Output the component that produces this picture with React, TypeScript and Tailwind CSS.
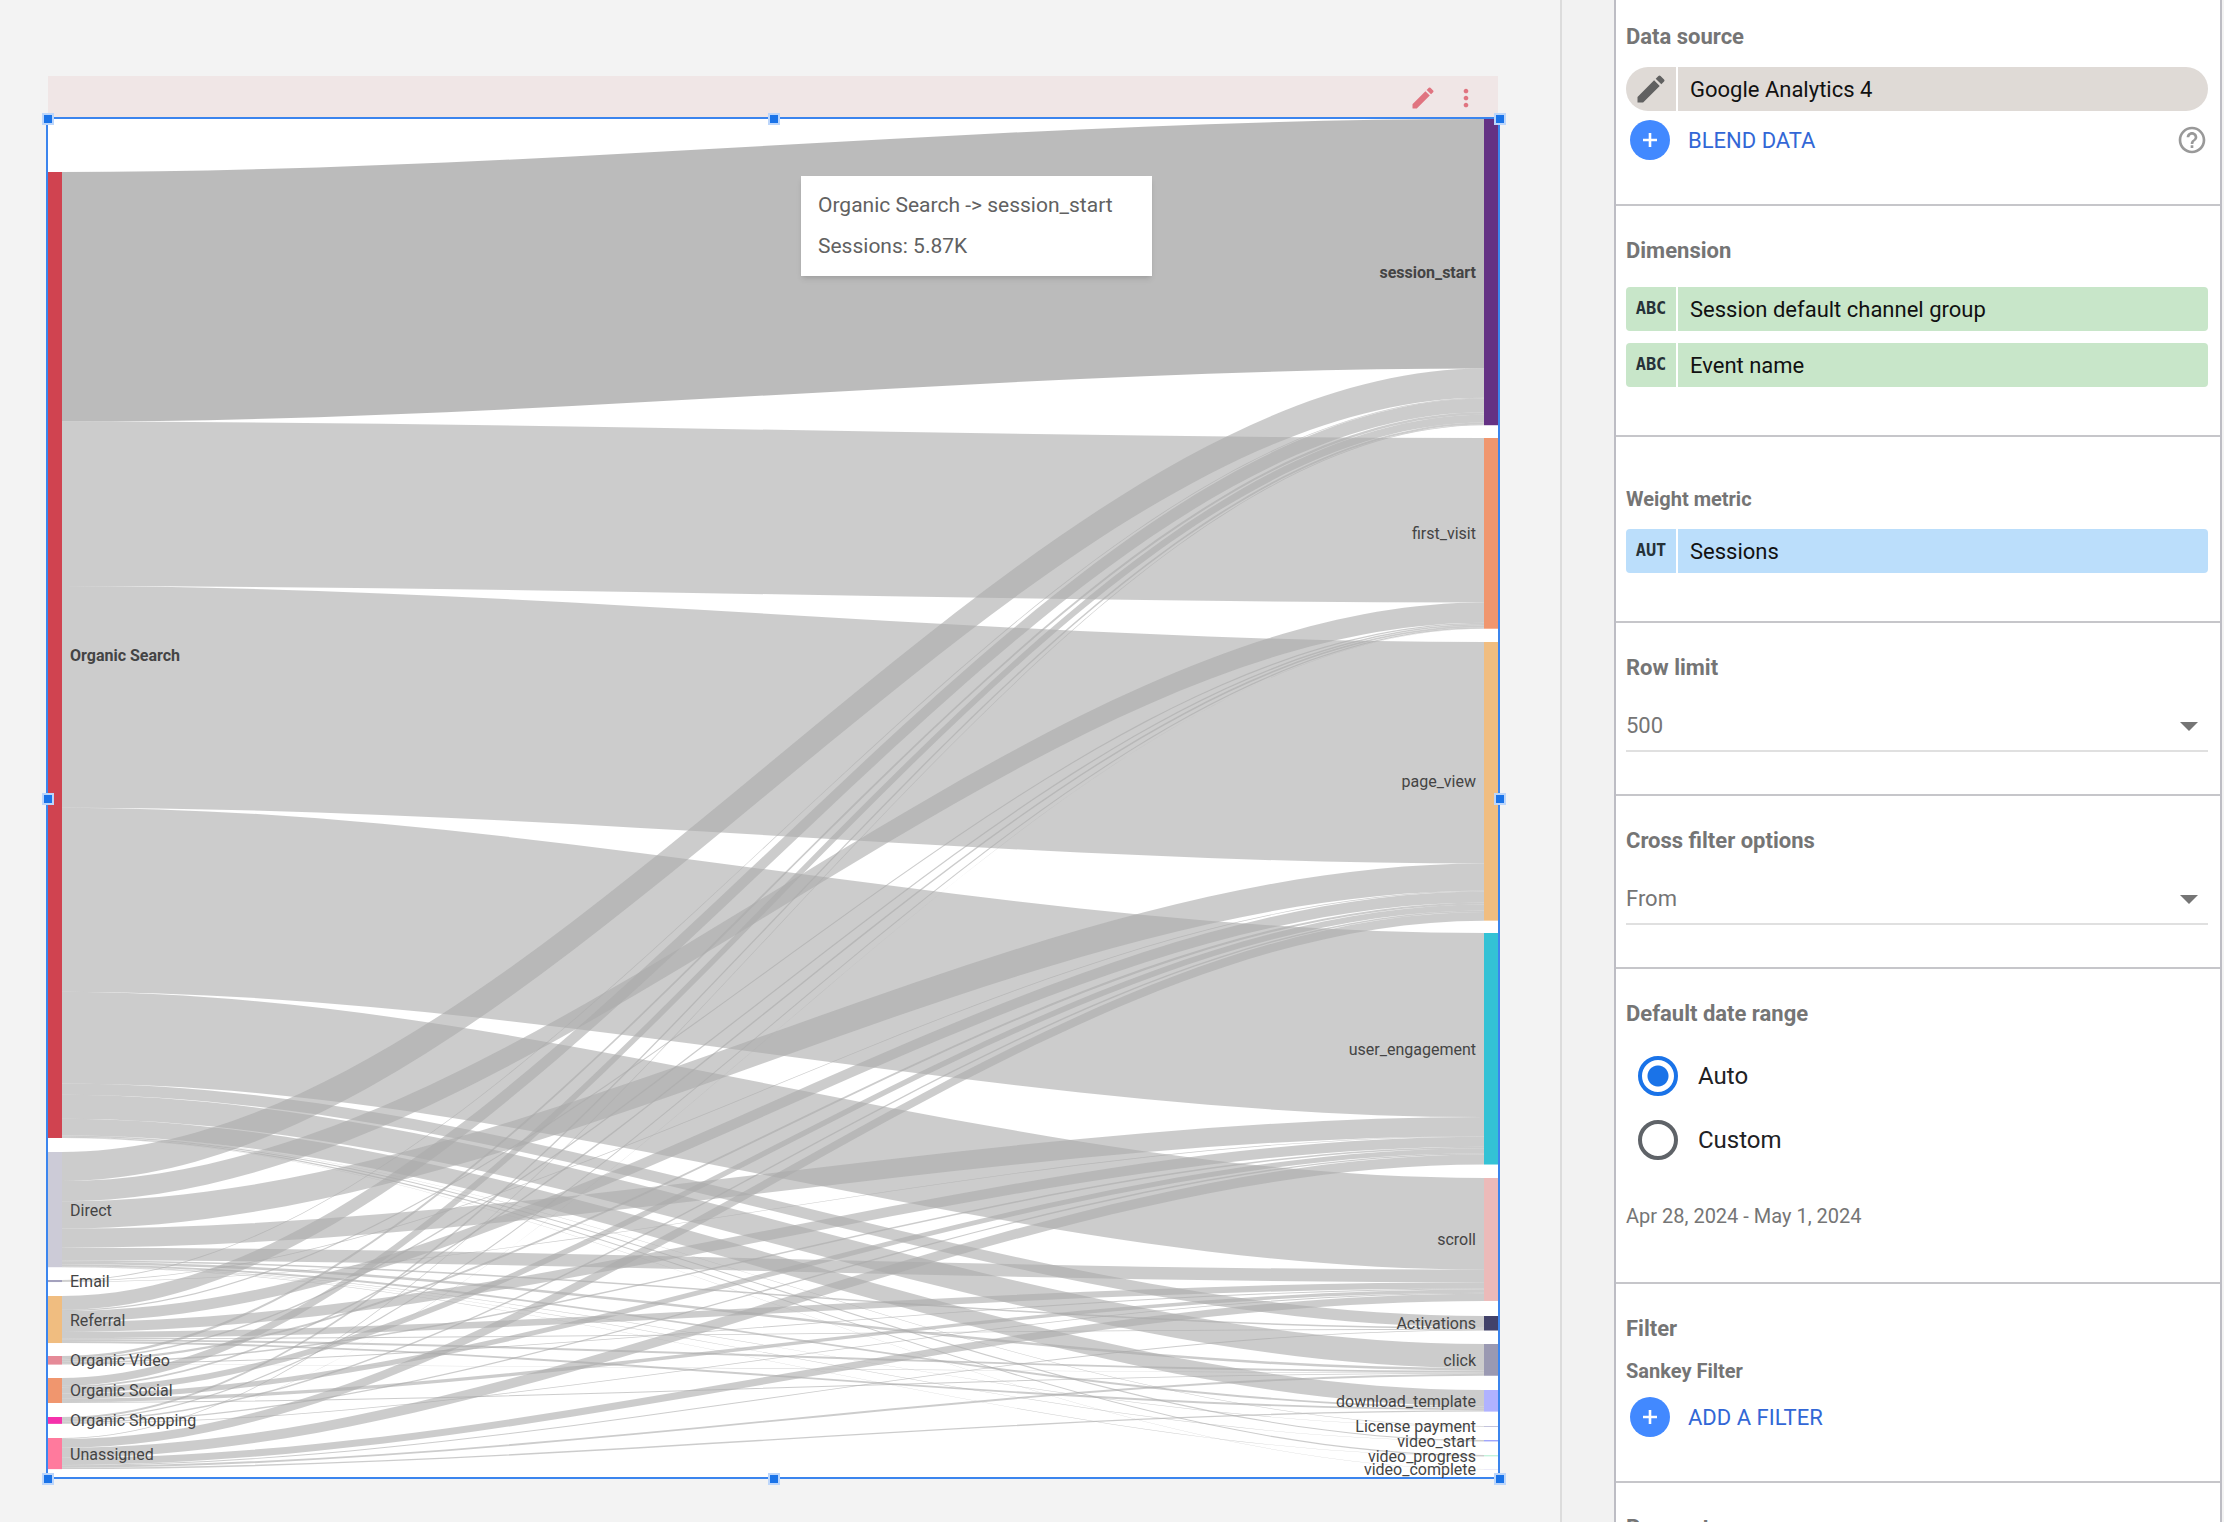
import { useState } from "react";
import type { ReactNode } from "react";
import { MdEdit, MdHelpOutline, MdMoreVert } from "react-icons/md";

// chart canvas
const WIDTH = 1450;
const HEIGHT = 1358;
const NODE = 14;
const SCALE = 0.04256; // px per session

type ChartNode = { name: string; y: number; color: string };

const sources: ChartNode[] = [
  { name: "Organic Search", y: 53, color: "#d04350" },
  { name: "Direct", y: 1033, color: "#cccbd7" },
  { name: "Email", y: 1161, color: "#a3a1bd" },
  { name: "Referral", y: 1177, color: "#f0bd80" },
  { name: "Organic Video", y: 1237, color: "#e58a97" },
  { name: "Organic Social", y: 1259, color: "#f0966e" },
  { name: "Organic Shopping", y: 1298, color: "#f531ab" },
  { name: "Unassigned", y: 1319, color: "#ff7a9d" },
];

const targets: ChartNode[] = [
  { name: "session_start", y: 0, color: "#643184" },
  { name: "first_visit", y: 319, color: "#f0966e" },
  { name: "page_view", y: 523, color: "#f0bd80" },
  { name: "user_engagement", y: 814, color: "#33c2d5" },
  { name: "scroll", y: 1059, color: "#ecbab9" },
  { name: "Activations", y: 1197, color: "#42426a" },
  { name: "click", y: 1225, color: "#9a99b2" },
  { name: "download_template", y: 1271, color: "#b0b2ff" },
  { name: "License payment", y: 1307, color: "#c3c3dc" },
  { name: "video_start", y: 1321, color: "#a0a5fa" },
  { name: "video_progress", y: 1336, color: "#c5f3dc" },
  { name: "video_complete", y: 1350, color: "#ecebfa" },
];

// sessions, one row per source and one column per target
const sessions = [
  [5865, 3865, 5205, 4325, 2155, 266, 565, 385, 10, 26, 26, 4],
  [682, 476, 642, 448, 294, 35, 60, 45, 10, 8, 7, 0],
  [20, 0, 16, 12, 0, 0, 0, 0, 0, 0, 0, 0],
  [325, 30, 255, 235, 150, 20, 45, 45, 0, 0, 0, 0],
  [55, 35, 48, 35, 20, 0, 9, 0, 0, 0, 0, 0],
  [185, 40, 140, 120, 80, 0, 22, 0, 0, 0, 0, 0],
  [45, 30, 36, 30, 20, 0, 0, 0, 0, 0, 0, 0],
  [18, 5, 205, 235, 170, 20, 45, 33, 0, 0, 0, 0],
];

const sum = (list: number[]) => list.reduce((acc, n) => acc + n, 0);
const sourceHeight = (i: number) => sum(sessions[i]) * SCALE;
const targetHeight = (j: number) => sum(sessions.map((r) => r[j])) * SCALE;

const getLinks = () => {
  const inY = targets.map((t) => t.y);
  return sources.flatMap((source, i) => {
    let outY = source.y;
    return targets.flatMap((target, j) => {
      const h = sessions[i][j] * SCALE;
      if (!h) return [];
      const x0 = NODE;
      const x1 = WIDTH - NODE;
      const c0 = x0 + (x1 - x0) / 3;
      const c1 = x1 - (x1 - x0) / 3;
      const a = outY;
      const b = inY[j];
      outY += h;
      inY[j] += h;
      return [
        {
          key: source.name + target.name,
          active: i === 0 && j === 0,
          d: `M${x0},${a}C${c0},${a} ${c1},${b} ${x1},${b}V${b + h}C${c1},${
            b + h
          } ${c0},${a + h} ${x0},${a + h}Z`,
        },
      ];
    });
  });
};

const Sankey = () => (
  <svg
    viewBox={`0 0 ${WIDTH} ${HEIGHT}`}
    className="block w-full overflow-visible bg-white"
    role="img"
    aria-label="Sessions by channel group and event"
  >
    {getLinks().map((link) => (
      <path
        key={link.key}
        d={link.d}
        fill="#aaaaaa"
        fillOpacity={link.active ? 0.8 : 0.6}
      />
    ))}
    {sources.map((node, i) => (
      <g key={node.name}>
        <rect
          y={node.y}
          width={NODE}
          height={sourceHeight(i)}
          fill={node.color}
        />
        <text
          x={22}
          y={node.y + sourceHeight(i) / 2 + 6}
          className={`text-[16px] fill-[#444444] ${i === 0 ? "font-bold" : ""}`}
        >
          {node.name}
        </text>
      </g>
    ))}
    {targets.map((node, j) => (
      <g key={node.name}>
        <rect
          x={WIDTH - NODE}
          y={node.y}
          width={NODE}
          height={Math.max(targetHeight(j), 1)}
          fill={node.color}
        />
        <text
          x={WIDTH - 22}
          y={node.y + targetHeight(j) / 2 + 6}
          textAnchor="end"
          className={`text-[16px] fill-[#444444] ${j === 0 ? "font-bold" : ""}`}
        >
          {node.name}
        </text>
      </g>
    ))}
  </svg>
);

const handles = [
  "left-0 top-0",
  "left-1/2 top-0",
  "left-full top-0",
  "left-0 top-1/2",
  "left-full top-1/2",
  "left-0 top-full",
  "left-1/2 top-full",
  "left-full top-full",
];

const ChartCard = () => (
  <div className="w-full">
    <div className="mx-[2px] flex h-[41px] items-center justify-end gap-[15px] bg-[#f0e6e6] pr-[18px] pt-[2px] text-[#e07480]">
      <button aria-label="Edit chart">
        <svg viewBox="0 0 24 24" className="size-7" fill="currentColor">
          <path d="M3 17.46v3.04c0 .28.22.5.5.5h3.04c.13 0 .26-.05.35-.15L17.81 9.94l-3.75-3.75L3.15 17.1c-.1.1-.15.22-.15.36zM20.71 7.04a.996.996 0 0 0 0-1.41l-2.34-2.34a.996.996 0 0 0-1.41 0l-1.83 1.83 3.75 3.75 1.83-1.83z" />
        </svg>
      </button>
      <button aria-label="More options">
        <MdMoreVert className="size-7" />
      </button>
    </div>
    <div className="relative border-2 border-[#3b85ee]">
      <Sankey />
      <div className="pointer-events-none absolute -bottom-[2px] -right-[2px] left-0 top-0">
        {handles.map((place) => (
          <span
            key={place}
            className={`absolute size-3 -translate-1/2 border-2 border-[#bcd6fb] bg-[#1a73e8] ${place}`}
          />
        ))}
      </div>
      <div className="absolute left-[753px] top-[57px] flex h-[100px] w-[351px] flex-col justify-center bg-white px-[17px] text-[21px] leading-[41px] text-[#616161] shadow-md">
        <p>Organic Search -&gt; session_start</p>
        <p>Sessions: 5.87K</p>
      </div>
    </div>
  </div>
);

const Section = ({
  className,
  children,
}: {
  className: string;
  children: ReactNode;
}) => (
  <section
    className={`border-b-2 border-[#c6c6ca] pl-[10px] pr-3 ${className}`}
  >
    {children}
  </section>
);

const Title = ({ children }: { children: ReactNode }) => (
  <h2 className="text-[22px] font-bold leading-[26px] text-[#757575]">
    {children}
  </h2>
);

const SubTitle = ({ children }: { children: ReactNode }) => (
  <h3 className="text-[20px] font-bold leading-6 text-[#757575]">{children}</h3>
);

const Chip = ({
  badge,
  label,
  color,
}: {
  badge: ReactNode;
  label: string;
  color: string;
}) => (
  <button className="flex h-11 w-full gap-[2px] text-left">
    <span
      className={`flex w-[50px] shrink-0 items-center justify-center rounded-l font-['DejaVu_Sans_Mono',monospace] text-[17px] font-bold text-[#263238] ${color}`}
    >
      {badge}
    </span>
    <span
      className={`flex grow items-center rounded-r pl-3 text-[22px] text-[#111111] ${color}`}
    >
      {label}
    </span>
  </button>
);

const AddButton = ({ label }: { label: string }) => (
  <button className="ml-1 flex items-center gap-[18px] text-[22px] text-[#3367d6]">
    <span className="flex size-10 items-center justify-center rounded-full bg-[#4289ff]">
      <svg viewBox="0 0 14 14" className="size-[14px]">
        <path d="M7 0V14M0 7H14" stroke="white" strokeWidth="2.6" />
      </svg>
    </span>
    {label}
  </button>
);

const Dropdown = ({ id, value }: { id: string; value: string }) => (
  <div className="relative">
    <select
      id={id}
      className="h-12 w-full appearance-none border-b-2 border-[#e0e0e0] pb-1 text-[22px] text-[#757575] outline-none"
    >
      <option>{value}</option>
    </select>
    <svg
      viewBox="0 0 18 9"
      className="pointer-events-none absolute right-[10px] top-[18px] h-[9px] w-[18px]"
    >
      <path d="M0 0H18L9 9Z" fill="#757575" />
    </svg>
  </div>
);

const SetupPanel = () => {
  const [range, setRange] = useState("Auto");

  return (
    <aside className="w-[608px] shrink-0 border-x-2 border-[#bdbdc4] bg-white">
      <Section className="h-[206px] pt-6">
        <Title>Data source</Title>
        <div className="mt-[17px] overflow-hidden rounded-full">
          <Chip
            badge={<MdEdit className="size-9 text-[#616161]" />}
            label="Google Analytics 4"
            color="bg-[#dfdad6]"
          />
        </div>
        <div className="mt-[9px] flex items-center justify-between">
          <AddButton label="BLEND DATA" />
          <button aria-label="Help">
            <MdHelpOutline className="size-8 text-[#999999]" />
          </button>
        </div>
      </Section>
      <Section className="h-[231px] pt-8">
        <Title>Dimension</Title>
        <div className="mt-[23px] flex flex-col gap-3">
          <Chip
            badge="ABC"
            label="Session default channel group"
            color="bg-[#c8e6c9]"
          />
          <Chip badge="ABC" label="Event name" color="bg-[#c8e6c9]" />
        </div>
      </Section>
      <Section className="h-[186px] pt-[50px]">
        <SubTitle>Weight metric</SubTitle>
        <div className="mt-[18px]">
          <Chip badge="AUT" label="Sessions" color="bg-[#bbdefb]" />
        </div>
      </Section>
      <Section className="h-[173px] pt-8">
        <label htmlFor="row-limit">
          <Title>Row limit</Title>
        </label>
        <div className="mt-[23px]">
          <Dropdown id="row-limit" value="500" />
        </div>
      </Section>
      <Section className="h-[173px] pt-8">
        <label htmlFor="cross-filter">
          <Title>Cross filter options</Title>
        </label>
        <div className="mt-[23px]">
          <Dropdown id="cross-filter" value="From" />
        </div>
      </Section>
      <Section className="h-[315px] pt-8">
        <Title>Default date range</Title>
        <div className="ml-3 mt-[29px] flex flex-col gap-6">
          {["Auto", "Custom"].map((item) => (
            <label
              key={item}
              className="flex h-10 items-center gap-5 text-[24px] text-[#202124]"
            >
              <input
                type="radio"
                name="range"
                checked={range === item}
                onChange={() => setRange(item)}
                className="size-10 appearance-none rounded-full border-4 border-[#5f6368] checked:border-[#1a73e8] checked:bg-[radial-gradient(circle,#1a73e8_10px,white_11px)]"
              />
              {item}
            </label>
          ))}
        </div>
        <p className="mt-11 text-[20px] leading-6 text-[#757575]">
          Apr 28, 2024 - May 1, 2024
        </p>
      </Section>
      <Section className="h-[199px] pt-8">
        <Title>Filter</Title>
        <div className="mt-[17px]">
          <SubTitle>Sankey Filter</SubTitle>
        </div>
        <div className="mt-[14px]">
          <AddButton label="ADD A FILTER" />
        </div>
      </Section>
      <Section className="pt-8">
        <Title>Parameters</Title>
      </Section>
    </aside>
  );
};

const App = () => (
  <div className="flex h-screen overflow-hidden bg-[#f3f3f3] pr-[2px] font-['Roboto',sans-serif]">
    <main className="min-w-0 grow pl-[46px] pr-[60px] pt-[76px]">
      <ChartCard />
    </main>
    <div className="w-[54px] shrink-0 border-l-2 border-[#dcdcdc] bg-[#f2f2f2]" />
    <SetupPanel />
  </div>
);

export default App;
